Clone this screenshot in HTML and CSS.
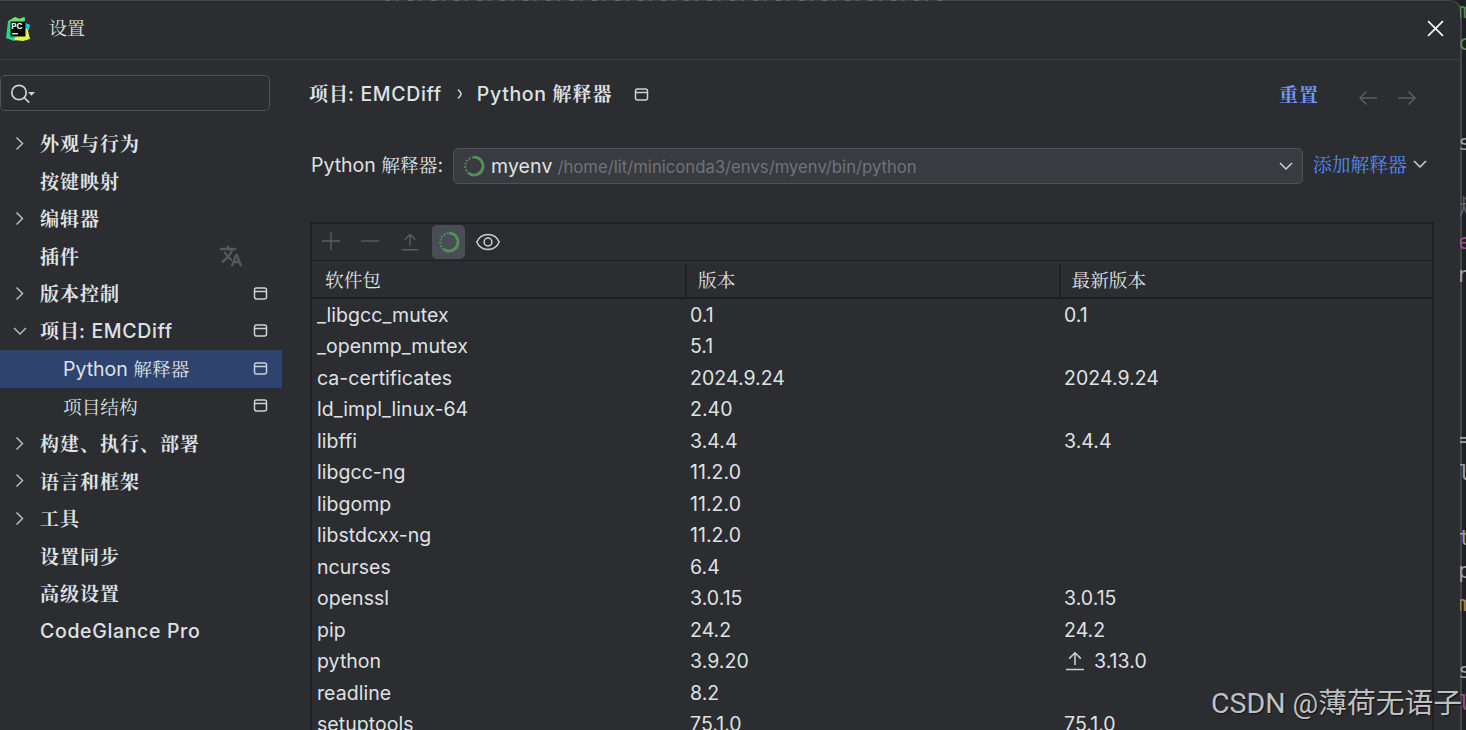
FILE: index.html
```
<!DOCTYPE html>
<html lang="zh-CN">
<head>
<meta charset="utf-8">
<title>设置</title>
<link rel="stylesheet" href="styles.css">
</head>
<body>
<svg class="defs" width="0" height="0">
  <symbol id="right" viewBox="0 0 24 24"><path d="M8.500 5.500l6 6-6 6"/></symbol>
  <symbol id="down" viewBox="0 0 24 24"><path d="M6 9l6 6 6-6"/></symbol>
  <symbol id="win" viewBox="0 0 24 24"><rect x="5.500" y="6" width="12" height="11" rx="2"/><path d="M5.500 9.500h12"/></symbol>
  <symbol id="spin" viewBox="0 0 24 24"><path d="M12 3.200a8.900 8.900 0 1 1-5 16.200" stroke-width="2.800"/><path d="M7 19.400A8.900 8.900 0 0 1 12 3.200" stroke-width="2" stroke-dasharray="1.800 1.500"/></symbol>
  <symbol id="upload" viewBox="0 0 24 24"><path d="M12 16V4.200M6.200 9.600L12 3.800l5.800 5.800M3 20.500h18"/></symbol>
</svg>
<div class="dialog">
  <header class="titlebar">
    <svg class="logo" viewBox="0 0 24 24"><path d="M2 4l7-4 5 2 5-2v7l-6 14-5 3-8-3z" fill="#21d789"/><path d="M3 4l6-4 4 2 5-2v6L5 8z" fill="#6be35c"/><path d="M19 6l5 2-2 6 2 8-7 2-9-1 2-5z" fill="#e4f64b"/><path d="M19 6l5 2-2 5-3-2z" fill="#07c3f2"/><path d="M4.500 4.500h15v15h-15z" fill="#050b08"/><text x="5.300" y="11.800" class="logotext">PC</text><path d="M6 16.700h6" stroke="#fff" stroke-width="1.200"/></svg>
    <span class="title">设置</span>
    <svg class="close" viewBox="0 0 16 16"><path d="M1 1l14 14M15 1L1 15"/></svg>
  </header>
  <div class="main">
    <aside class="side">
      <div class="search"><svg viewBox="0 0 28 24"><circle cx="9" cy="10.500" r="7.200"/><path d="M14.200 15.700l5 5"/><path class="solid" d="M18 10h7l-3.500 3.800z"/></svg></div>
      <nav class="tree">
        <div class="item"><svg class="i arrow"><use href="#right"/></svg><span class="b zh">外观与行为</span></div>
        <div class="item"><i class="arrow"></i><span class="b zh">按键映射</span></div>
        <div class="item"><svg class="i arrow"><use href="#right"/></svg><span class="b zh">编辑器</span></div>
        <div class="item"><i class="arrow"></i><span class="b zh">插件</span><svg class="lang" viewBox="0 0 24 24"><path d="M12.870 15.070l-2.540-2.510.03-.03A17.500 17.500 0 0 0 14.070 6H17V4h-7V2H8v2H1v2h11.170C11.500 7.920 10.440 9.750 9 11.350 8.070 10.320 7.300 9.190 6.690 8h-2c.73 1.630 1.730 3.170 2.980 4.560l-5.090 5.020L4 19l5-5 3.110 3.110zM18.500 10h-2L12 22h2l1.120-3h4.750L21 22h2zm-2.620 7l1.620-4.330L19.120 17z"/></svg></div>
        <div class="item"><svg class="i arrow"><use href="#right"/></svg><span class="b zh">版本控制</span><svg class="i tag"><use href="#win"/></svg></div>
        <div class="item"><svg class="i arrow"><use href="#down"/></svg><span class="b mixed">项目<span class="en colon">: EMCDiff</span></span><svg class="i tag"><use href="#win"/></svg></div>
        <div class="item child on"><span class="mixed">Python <span class="zn">解释器</span></span><svg class="i tag"><use href="#win"/></svg></div>
        <div class="item child"><span class="zn zh">项目结构</span><svg class="i tag"><use href="#win"/></svg></div>
        <div class="item"><svg class="i arrow"><use href="#right"/></svg><span class="b zh">构建、执行、部署</span></div>
        <div class="item"><svg class="i arrow"><use href="#right"/></svg><span class="b zh">语言和框架</span></div>
        <div class="item"><svg class="i arrow"><use href="#right"/></svg><span class="b zh">工具</span></div>
        <div class="item"><i class="arrow"></i><span class="b zh">设置同步</span></div>
        <div class="item"><i class="arrow"></i><span class="b zh">高级设置</span></div>
        <div class="item"><i class="arrow"></i><span class="b en">CodeGlance Pro</span></div>
      </nav>
    </aside>
    <section class="content">
      <div class="crumbs">
        <span class="b">项目<span class="en colon">: EMCDiff</span></span>
        <svg class="sep" viewBox="0 0 8 12"><path d="M2 1.500q3 3 3 4.500t-3 4.500"/></svg>
        <span class="b"><span class="en">Python </span>解释器</span>
        <svg class="i crumbtag"><use href="#win"/></svg>
        <span class="b zh reset">重置</span>
        <svg class="nav" viewBox="0 0 20 16"><path d="M19 8H2M8.500 1.500L2 8l6.500 6.500"/></svg>
        <svg class="nav" viewBox="0 0 20 16"><path d="M1 8h17M11.500 1.500L18 8l-6.500 6.500"/></svg>
      </div>
      <div class="picker">
        <label>Python <span class="zn">解释器</span>:</label>
        <div class="combo"><svg class="i spin"><use href="#spin"/></svg><span class="env">myenv</span><span class="path">/home/lit/miniconda3/envs/myenv/bin/python</span><svg class="i"><use href="#down"/></svg></div>
        <span class="add">添加解释器</span><svg class="i adddown"><use href="#down"/></svg>
      </div>
      <div class="panel">
        <div class="tools">
          <span class="tool"><svg class="i off plus" viewBox="0 0 24 24"><path d="M12 2v20M2 12h20"/></svg></span>
          <span class="tool"><svg class="i off plus" viewBox="0 0 24 24"><path d="M2 12h20"/></svg></span>
          <span class="tool"><svg class="i off"><use href="#upload"/></svg></span>
          <span class="tool active"><svg class="i spin"><use href="#spin"/></svg></span>
          <span class="tool"><svg class="i eye" viewBox="0 0 26 24"><path d="M1.800 12C4 7 8 4.500 13 4.500S22 7 24.200 12C22 17 18 19.500 13 19.500S4 17 1.800 12z"/><circle cx="13" cy="12" r="3.900"/></svg></span>
        </div>
        <div class="head"><span>软件包</span><span>版本</span><span>最新版本</span></div>
        <div class="rows">
          <div class="row"><span>_libgcc_mutex</span><span>0.1</span><span>0.1</span></div>
          <div class="row"><span>_openmp_mutex</span><span>5.1</span><span></span></div>
          <div class="row"><span>ca-certificates</span><span>2024.9.24</span><span>2024.9.24</span></div>
          <div class="row"><span>ld_impl_linux-64</span><span>2.40</span><span></span></div>
          <div class="row"><span>libffi</span><span>3.4.4</span><span>3.4.4</span></div>
          <div class="row"><span>libgcc-ng</span><span>11.2.0</span><span></span></div>
          <div class="row"><span>libgomp</span><span>11.2.0</span><span></span></div>
          <div class="row"><span>libstdcxx-ng</span><span>11.2.0</span><span></span></div>
          <div class="row"><span>ncurses</span><span>6.4</span><span></span></div>
          <div class="row"><span>openssl</span><span>3.0.15</span><span>3.0.15</span></div>
          <div class="row"><span>pip</span><span>24.2</span><span>24.2</span></div>
          <div class="row"><span>python</span><span>3.9.20</span><span class="up"><svg class="i"><use href="#upload"/></svg>3.13.0</span></div>
          <div class="row"><span>readline</span><span>8.2</span><span></span></div>
          <div class="row"><span>setuptools</span><span>75.1.0</span><span>75.1.0</span></div>
        </div>
      </div>
    </section>
  </div>
</div>
<div class="editor">
  <span class="g green" style="top:-4px">m</span><span class="g green" style="top:28px">c</span><span class="g" style="top:128px">s</span><span class="g dim" style="top:193px">默</span><span class="g purple" style="top:227px">e</span><span class="g" style="top:260px">n</span><span class="g" style="top:425px">=</span><span class="g" style="top:458px">l</span><span class="g" style="top:523px">t</span><span class="g" style="top:556px">p</span><span class="g tan" style="top:589px">m</span><span class="g" style="top:656px">s</span><span class="g purple" style="top:688px">l</span>
</div>
<div class="codeline"></div>
<div class="watermark">CSDN @<span>薄荷无语子</span></div>
</body>
</html>
```
FILE: styles.css
```
* { box-sizing: border-box; }
body { margin: 0; width: 1466px; height: 730px; overflow: hidden; position: relative; background: #1e1f22; color: #dfe1e5; font: 19.5px/24px Inter, "Noto Serif CJK SC", "Noto Sans CJK SC", sans-serif; white-space: nowrap; }
svg { fill: none; stroke: #ced0d6; stroke-width: 1.5; flex: none; }
.defs { position: absolute; }
.i { width: 24px; height: 24px; }
.b { font-weight: 700; font-size: 19px; letter-spacing: 1px; }
.en { font-weight: 500; font-size: 19.5px; letter-spacing: .65px; }
.colon { margin-left: -1px; }
.zn { font-size: 18.7px; }
.zh { padding-top: 3px; }
.mixed { padding-top: 1px; }
.editor { position: absolute; inset: 0 0 0 1460px; overflow: hidden; }
.g { position: absolute; left: -2px; font: 22px/30px "DejaVu Sans Mono", "Noto Sans CJK SC", monospace; color: #9b9da3; }
.green { color: #568b56; }
.purple { color: #994f91; }
.dim { color: #5d626b; left: -12px; }
.tan { color: #a88757; }
.dialog { position: relative; width: 1462px; height: 742px; background: #2b2d30; border: 1px solid #43454a; border-width: 1px 2px 0 0; border-top-right-radius: 12px; }
.titlebar { height: 59px; border-bottom: 1px solid #3b3d40; display: flex; align-items: center; padding: 0 16px 3px 6px; }
.logo { width: 24px; height: 24px; stroke: none; }
.logotext { font: 700 8px Inter, sans-serif; fill: #fff; }
.title { font-size: 18px; margin-left: 19px; flex: 1; }
.close { width: 17px; height: 17px; stroke: #fff; }
.main { display: flex; }
.side { width: 282px; padding-top: 15px; }
.search { width: 270px; height: 36px; border: 1.5px solid #4e5157; border-radius: 5px; padding: 6px 9px; }
.search svg { width: 28px; height: 24px; stroke-width: 1.7; }
.search .solid { fill: #ced0d6; stroke: none; }
.tree { padding-top: 14px; }
.item { height: 37.5px; display: flex; align-items: center; padding-left: 8px; padding-right: 9px; }
.arrow { width: 24px; height: 24px; margin-right: 8px; stroke: #b4b8bf; }
.tag { margin-left: auto; }
.child { padding-left: 63px; }
.on { background: #2e436e; }
.lang { width: 24px; height: 24px; margin-left: auto; margin-right: 30px; fill: #565a5e; stroke: #565a5e; stroke-width: .5; }
.content { width: 1178px; padding: 16px 27px 0 28px; }
.crumbs { height: 36px; display: flex; align-items: center; margin-left: -1px; }
.sep { width: 8px; height: 12px; margin: 0 13px 0 14px; }
.crumbtag { margin-left: 17px; margin-top: 2px; }
.reset { margin-left: auto; color: #6b9bfa; }
.nav { width: 20px; height: 16px; margin: 7px 0 0 19px; stroke: #5a5d63; }
.reset + .nav { margin-left: 39px; }
.nav:last-child { margin-right: 16px; }
.picker { height: 36px; margin-top: 35.5px; display: flex; align-items: center; }
.picker label { width: 143px; padding-left: 1px; }
.combo { width: 850px; height: 36px; border: 1.5px solid #4e5157; border-radius: 5px; background: #393b40; display: flex; align-items: center; padding: 0 4px 0 8px; }
.combo .i:last-child { margin-left: auto; }
.spin { stroke: #549159; }
.env { margin: 0 5px 0 5px; letter-spacing: .1px; }
.path { font-size: 16.7px; color: #6f737a; padding-top: 2px; }
.add { margin-left: 10px; color: #548af7; font-size: 18.8px; padding-top: 1px; }
.adddown { margin-left: 1px; margin-top: -4px; }
.panel { margin-top: 38.5px; width: 1124px; height: 520px; border: 2px solid #1e1f22; }
.tools { height: 37px; border-bottom: 1px solid #1e1f22; display: flex; align-items: center; gap: 6px; padding-left: 3px; }
.tool { width: 33px; height: 34px; display: flex; align-items: center; justify-content: center; border-radius: 5px; }
.active { background: #4a4d54; }
.off { stroke: #5a5d63; width: 22px; height: 22px; }
.plus { margin: 0 2px 2px 0; }
.eye { width: 26px; }
.head { height: 38px; border-bottom: 2px solid #1e1f22; display: grid; grid-template-columns: 373px 373.5px 1fr; padding-top: 3px; }
.head span { font-size: 18.7px; line-height: 34px; padding-left: 11px; height: 33px; border-left: 2px solid #1e1f22; }
.head span:first-child { border: 0; padding-left: 13px; }
.row { height: 31.5px; display: grid; grid-template-columns: 373px 374px 1fr; align-items: center; padding-left: 5px; letter-spacing: .04px; }
.up { display: flex; align-items: center; gap: 7px; margin-left: -1px; }
.codeline { position: absolute; left: 385px; top: 0; width: 563px; height: 1px; background: repeating-linear-gradient(90deg, #64676c 0 5px, #43454a 5px 11px, #595c61 11px 14px, #3c3e42 14px 23px); }
.watermark { position: absolute; left: 1211px; top: 685px; font: 28.5px/36px Roboto, "Noto Sans CJK SC", sans-serif; color: #bfc0c1; text-shadow: 1px 1px 1px #111; }
.watermark span { font-size: 28.8px; }
```
